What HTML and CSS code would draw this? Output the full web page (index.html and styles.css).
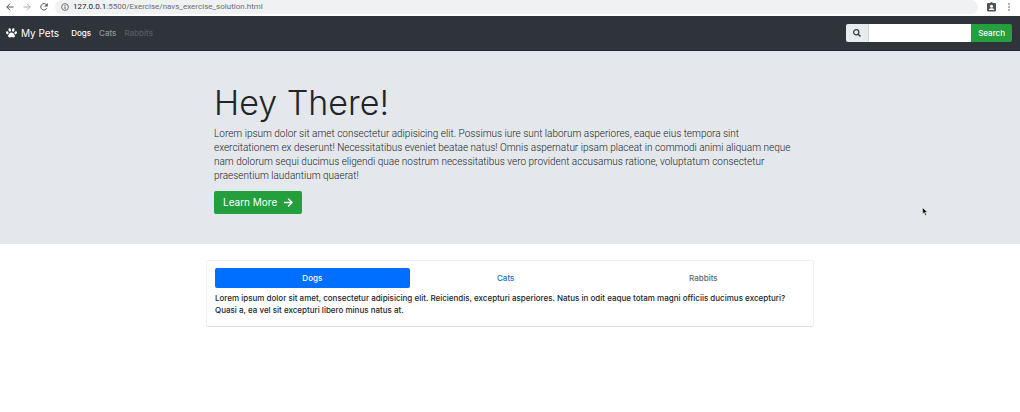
FILE: index.html
```html
<!DOCTYPE html>
<html lang="en">
<head>
<meta charset="utf-8">
<meta name="viewport" content="width=device-width, initial-scale=1">
<title>My Pets</title>
<link rel="stylesheet" href="styles.css">
</head>
<body>
<div class="browser">
  <button class="tool" type="button" aria-label="Back"><svg width="8" height="8" viewBox="0 0 16 16"><path d="M15 8H2M8 1.500L1.500 8L8 14.500" fill="none" stroke="#50545a" stroke-width="2"/></svg></button>
  <button class="tool" type="button" aria-label="Forward"><svg width="8" height="8" viewBox="0 0 16 16"><path d="M1 8h13M8 1.500L14.500 8L8 14.500" fill="none" stroke="#a9acb0" stroke-width="2"/></svg></button>
  <button class="tool" type="button" aria-label="Reload"><svg width="8" height="8" viewBox="0 0 16 16"><path d="M13.500 10.500A6.300 6.300 0 1 1 13 4" fill="none" stroke="#50545a" stroke-width="2"/><path d="M15.500 0v7h-7z" fill="#50545a"/></svg></button>
  <div class="address">
    <svg width="8" height="8" viewBox="0 0 16 16" aria-hidden="true"><circle cx="8" cy="8" r="6.800" fill="none" stroke="#50545a" stroke-width="1.600"/><path d="M8 7v5M8 4v2" stroke="#50545a" stroke-width="1.800"/></svg>
    <span class="url"><span class="host">127.0.0.1</span>:5500/Exercise/navs_exercise_solution.html</span>
  </div>
  <button class="tool account" type="button" aria-label="Account"><svg width="9" height="10" viewBox="0 0 18 20"><path d="M2 2h4.500a2.600 2.600 0 0 1 5 0H16a2 2 0 0 1 2 2v13a2 2 0 0 1-2 2H2a2 2 0 0 1-2-2V4a2 2 0 0 1 2-2z" fill="#50545a"/><circle cx="9" cy="8.500" r="3" fill="#fff"/><path d="M3.500 16c0-5 11-5 11 0z" fill="#fff"/></svg></button>
  <button class="tool" type="button" aria-label="Menu"><svg width="8" height="8" viewBox="0 0 16 16"><g fill="#50545a"><circle cx="8" cy="2" r="1.600"/><circle cx="8" cy="8" r="1.600"/><circle cx="8" cy="14" r="1.600"/></g></svg></button>
</div>

<nav class="navbar" aria-label="Main">
  <a class="brand" href="#"><svg width="11" height="10" viewBox="0 0 22 20" aria-hidden="true"><g fill="#fff"><ellipse cx="7.500" cy="4" rx="2.500" ry="3.500" transform="rotate(-12 7.500 4)"/><ellipse cx="14.500" cy="4" rx="2.500" ry="3.500" transform="rotate(12 14.500 4)"/><ellipse cx="2.600" cy="9.500" rx="2.300" ry="3.200" transform="rotate(-22 2.600 9.500)"/><ellipse cx="19.400" cy="9.500" rx="2.300" ry="3.200" transform="rotate(22 19.400 9.500)"/><path d="M11 9c-3.500 0-6.800 4.500-6.800 7.200C4.200 18 5.500 18.800 7 18.800c1.600 0 2.600-.8 4-.8s2.400.8 4 .8c1.500 0 2.800-.8 2.800-2.600C17.800 13.500 14.500 9 11 9z"/></g></svg>My Pets</a>
  <div class="links">
    <a class="link current" href="#dogs" aria-current="page">Dogs</a>
    <a class="link" href="#cats">Cats</a>
    <a class="link disabled" href="#rabbits" aria-disabled="true">Rabbits</a>
  </div>
  <form class="search">
    <label class="search-label" for="query" aria-label="Search pets"><svg width="8" height="8" viewBox="0 0 16 16" aria-hidden="true"><circle cx="6.500" cy="6.500" r="5.200" fill="none" stroke="#343a40" stroke-width="2.400"/><path d="M10.500 10.500l4.500 4.500" stroke="#343a40" stroke-width="3"/></svg></label>
    <input class="search-input" id="query" type="text">
    <button class="search-button" type="button">Search</button>
  </form>
</nav>

<header class="hero">
  <div class="hero-inner">
    <h1 class="title">Hey There!</h1>
    <p class="lead">Lorem ipsum dolor sit amet consectetur adipisicing elit. Possimus iure sunt laborum asperiores, eaque eius tempora sint exercitationem ex deserunt! Necessitatibus eveniet beatae natus! Omnis aspernatur ipsam placeat in commodi animi aliquam neque nam dolorum sequi ducimus eligendi quae nostrum necessitatibus vero provident accusamus ratione, voluptatum consectetur praesentium laudantium quaerat!</p>
    <a class="more" href="#dogs">Learn More<svg width="9" height="9" viewBox="0 0 18 18" aria-hidden="true"><path d="M1 9h14M9 2l7 7l-7 7" fill="none" stroke="#fff" stroke-width="2.800" stroke-linecap="round"/></svg></a>
  </div>
</header>

<main class="card">
  <div class="tabs">
    <a class="tab active" href="#dogs">Dogs</a>
    <a class="tab" href="#cats">Cats</a>
    <a class="tab muted" href="#rabbits">Rabbits</a>
  </div>
  <p class="description" id="dogs">Lorem ipsum dolor sit amet, consectetur adipisicing elit. Reiciendis, excepturi asperiores. Natus in odit eaque totam magni officiis ducimus excepturi? Quasi a, ea vel sit excepturi libero minus natus at.</p>
</main>
<svg class="cursor" width="6" height="9" viewBox="0 0 12 18" aria-hidden="true"><path d="M1 1v13l3-3l2.500 6l2.500-1l-2.500-5.500H11z" fill="#111" stroke="#fff" stroke-width="1"/></svg>
</body>
</html>
```
FILE: styles.css
```css
* { box-sizing: border-box; }
body {
  margin: 0;
  background: #fff;
  color: #212529;
  font-family: Inter, "Liberation Sans", sans-serif;
  font-size: 8px;
  font-weight: 500;
  line-height: 12px;
}
a { text-decoration: none; }
svg { display: block; flex: none; }
button, input { font: inherit; border: 0; padding: 0; }

.browser {
  display: flex;
  align-items: center;
  gap: 9px;
  height: 16px;
  padding: 0 7px 2px 6px;
}
.tool { background: none; }
.address {
  display: flex;
  flex: 1;
  align-items: center;
  gap: 4px;
  height: 14px;
  padding: 0 6px;
  margin-left: -2px;
  border-radius: 7px;
  background: #eff1f2;
  color: #6b6f73;
  font-family: Roboto, "Liberation Sans", sans-serif;
  font-weight: 400;
}
.host { color: #202124; }

.navbar {
  display: flex;
  align-items: center;
  gap: 12px;
  padding: 8px 8px 8px 6px;
  border-bottom: 1px solid #22272b;
  background: #2f343a;
}
.brand {
  display: flex;
  align-items: center;
  gap: 4px;
  color: #fff;
  font-size: 10px;
  font-weight: 400;
}
.links { display: flex; flex: 1; gap: 8px; }
.link { color: #94979a; }
.current { color: #fff; }
.disabled { color: #5a5e63; }
.search { display: flex; height: 18px; }
.search-label {
  display: flex;
  align-items: center;
  padding: 0 7px;
  border-right: 1px solid #ced4da;
  border-radius: 2px 0 0 2px;
  background: #e9ecef;
}
.search-input { width: 102px; background: #fff; }
.search-button {
  padding: 0 7px;
  border-radius: 0 2px 2px 0;
  background: #249f3d;
  color: #fff;
}

.hero { padding: 32px 16px 30px; background: #e4e7eb; }
.hero-inner { max-width: 592px; margin: 0 auto; }
.title {
  margin: 0 0 4px;
  font-size: 34px;
  font-weight: 300;
  line-height: 40px;
}
.lead {
  margin: 0 0 8px;
  font-family: Roboto, "Liberation Sans", sans-serif;
  font-size: 10px;
  font-weight: 300;
  line-height: 14px;
}
.more {
  display: inline-flex;
  align-items: center;
  gap: 7px;
  padding: 4px 9px;
  border-radius: 2px;
  background: #249f3d;
  color: #fff;
  font-size: 10px;
  font-weight: 400;
  line-height: 15px;
}

.card {
  max-width: 608px;
  margin: 16px auto;
  padding: 7px 8px 10px;
  border: 1px solid #eeeff0;
  border-bottom-color: #dcdddf;
  border-radius: 2px;
}
.tabs { display: flex; margin-bottom: 4px; }
.tab {
  flex: 1 1 auto;
  padding: 4px 8px;
  border-radius: 2px;
  color: #1c70bc;
  text-align: center;
}
.active { background: #006fff; color: #fff; }
.muted { color: #60676e; }
.description { margin: 0; }

.cursor { position: absolute; top: 207px; left: 922px; }
```
